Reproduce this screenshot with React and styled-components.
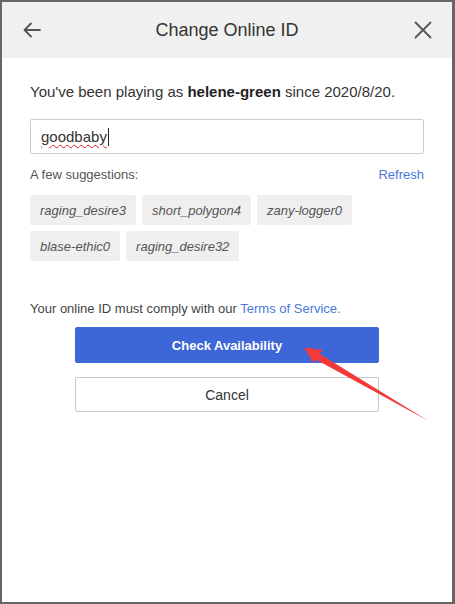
import React from 'react'
import styled, { createGlobalStyle } from 'styled-components'

const GlobalStyle = createGlobalStyle`
  html, body {
    margin: 0;
    padding: 0;
    background: #fff;
  }
  body {
    font-family: "Liberation Sans", Arial, sans-serif;
    color: #333;
  }
`

const Frame = styled.div`
  position: relative;
  box-sizing: border-box;
  width: 455px;
  height: 604px;
  border-style: solid;
  border-color: #666;
  border-width: 2px 3px 2px 2px;
  background: #fff;
  display: flex;
  flex-direction: column;
`

const Header = styled.header`
  height: 56px;
  flex: none;
  background: #f0f0f0;
  display: grid;
  grid-template-columns: 56px 1fr 56px;
  align-items: center;
`

const IconButton = styled.button`
  background: none;
  border: 0;
  padding: 0;
  height: 56px;
  display: flex;
  align-items: center;
  justify-content: ${p => (p.$end ? 'flex-end' : 'flex-start')};
  padding-left: ${p => (p.$end ? '0' : '21px')};
  padding-right: ${p => (p.$end ? '20px' : '0')};
  color: #555;
  cursor: pointer;
`

const Title = styled.h1`
  margin: 0;
  text-align: center;
  font-size: 18px;
  font-weight: 400;
  color: #333;
`

const Body = styled.main`
  padding: 24px 28px 0 28px;
  display: flex;
  flex-direction: column;
`

const Intro = styled.p`
  margin: 0;
  font-size: 15px;
  line-height: 20px;
  color: #333;

  strong {
    color: #222;
  }
`

const Field = styled.div`
  box-sizing: border-box;
  margin-top: 17px;
  height: 35px;
  border: 1px solid #ccc;
  border-radius: 2px;
  padding: 0 10px;
  display: flex;
  align-items: center;
  font-size: 15px;
  color: #333;
`

const Misspelled = styled.span`
  text-decoration-line: underline;
  text-decoration-style: wavy;
  text-decoration-color: #e02020;
  text-decoration-thickness: 1px;
  text-underline-offset: 2px;
`

const Caret = styled.span`
  display: inline-block;
  width: 1px;
  height: 18px;
  background: #222;
  margin-left: 1px;
`

const SuggestHead = styled.div`
  margin-top: 12px;
  display: flex;
  justify-content: space-between;
  align-items: center;
  font-size: 13px;
  line-height: 18px;
  color: #555;
`

const LinkText = styled.a`
  color: #4a78dc;
  text-decoration: none;
  cursor: pointer;
`

const Chips = styled.div`
  margin-top: 11px;
  display: flex;
  flex-wrap: wrap;
  gap: 6px;
`

const Chip = styled.span`
  height: 30px;
  padding: 0 10px;
  border-radius: 2px;
  background: #efefef;
  display: inline-flex;
  align-items: center;
  font-size: 13px;
  font-style: italic;
  color: #555;
`

const Terms = styled.p`
  margin: 39px 0 0;
  font-size: 13px;
  line-height: 18px;
  color: #444;
`

const Actions = styled.div`
  margin-top: 9px;
  display: flex;
  flex-direction: column;
  align-items: center;
  gap: 14px;
`

const Button = styled.button`
  box-sizing: border-box;
  width: 304px;
  height: ${p => (p.$primary ? '36px' : '35px')};
  border-radius: 2px;
  border: 1px solid ${p => (p.$primary ? '#3d66d6' : '#c8c8c8')};
  background: ${p => (p.$primary ? '#3d66d6' : '#fff')};
  color: ${p => (p.$primary ? '#fff' : '#333')};
  font-family: "Liberation Sans", Arial, sans-serif;
  font-size: ${p => (p.$primary ? '13px' : '14px')};
  font-weight: ${p => (p.$primary ? 700 : 400)};
  cursor: pointer;
`

const Annotation = styled.svg`
  position: absolute;
  left: -2px;
  top: -2px;
  pointer-events: none;
`

const suggestions = ['raging_desire3', 'short_polygon4', 'zany-logger0', 'blase-ethic0', 'raging_desire32']

const BackIcon = () => (
  <svg width="18" height="16" viewBox="0 0 18 16" fill="none" stroke="#555" strokeWidth="1.8" strokeLinecap="round" strokeLinejoin="round">
    <path d="M17 8H1.5M8 1.5L1.5 8 8 14.5" />
  </svg>
)

const CloseIcon = () => (
  <svg width="18" height="18" viewBox="0 0 18 18" fill="none" stroke="#555" strokeWidth="1.8" strokeLinecap="round">
    <path d="M1.5 1.5l15 15M16.5 1.5l-15 15" />
  </svg>
)

const App = () => (
  <>
    <GlobalStyle />
    <Frame>
      <Header>
        <IconButton aria-label="Back"><BackIcon /></IconButton>
        <Title>Change Online ID</Title>
        <IconButton $end aria-label="Close"><CloseIcon /></IconButton>
      </Header>
      <Body>
        <Intro>
          You've been playing as <strong>helene-green</strong> since 2020/8/20.
        </Intro>
        <Field>
          <Misspelled>goodbaby</Misspelled>
          <Caret />
        </Field>
        <SuggestHead>
          <span>A few suggestions:</span>
          <LinkText>Refresh</LinkText>
        </SuggestHead>
        <Chips>
          {suggestions.map(s => <Chip key={s}>{s}</Chip>)}
        </Chips>
        <Terms>
          Your online ID must comply with our <LinkText>Terms of Service.</LinkText>
        </Terms>
        <Actions>
          <Button $primary>Check Availability</Button>
          <Button>Cancel</Button>
        </Actions>
      </Body>
      <Annotation width="455" height="604" viewBox="0 0 455 604">
        <polygon
          fill="#f23a3a"
          points="304,347.5 323,350 319.5,353.8 428.5,421 315.8,359.6 313.5,363.5"
        />
      </Annotation>
    </Frame>
  </>
)

export default App
